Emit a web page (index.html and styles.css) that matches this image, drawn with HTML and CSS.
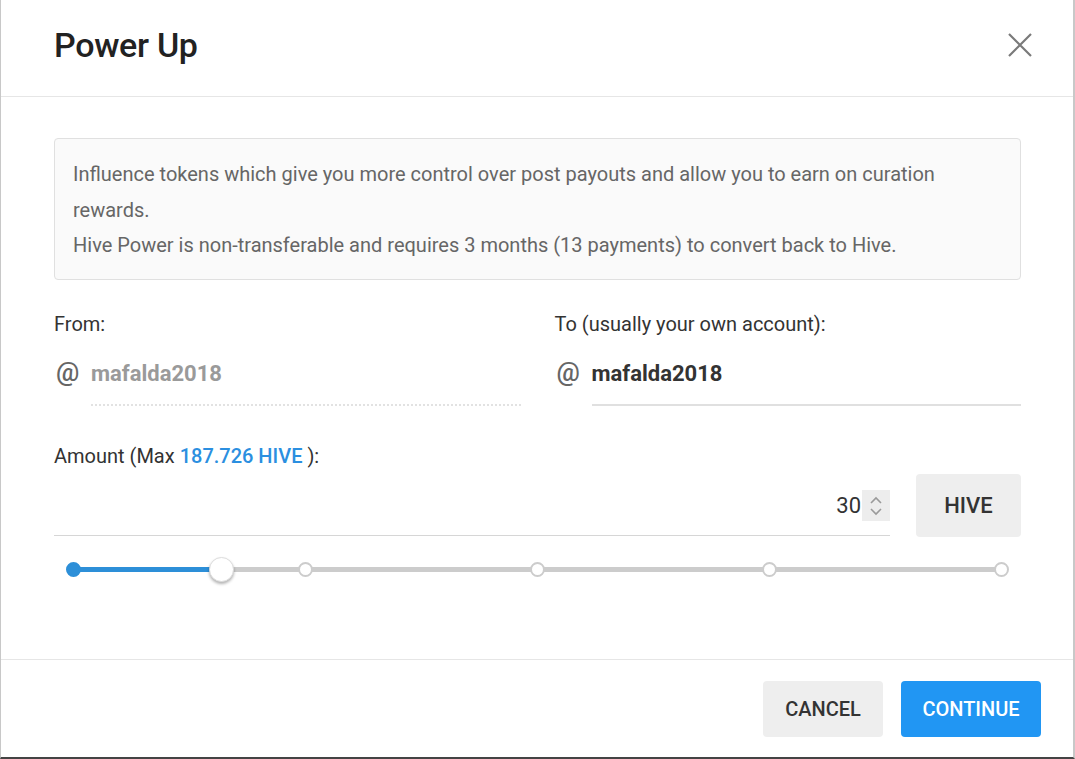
FILE: index.html
```html
<!DOCTYPE html>
<html lang="en">
<head>
    <meta charset="UTF-8">
    <meta name="viewport" content="width=device-width, initial-scale=1.0">
    <title>Power Up</title>
    <link rel="stylesheet" href="styles.css">
</head>
<body>
    <div class="modal">
        <div class="modal-header">
            <h1>Power Up</h1>
            <button class="close" aria-label="Close">
                <svg width="26" height="26" viewBox="0 0 26 26">
                    <path d="M2 2 L24 24 M24 2 L2 24" stroke="#7a7a7a" stroke-width="2.2" fill="none"/>
                </svg>
            </button>
        </div>

        <div class="modal-body">
            <div class="info">
                Influence tokens which give you more control over post payouts and allow you to earn on curation rewards.<br>
                Hive Power is non-transferable and requires 3 months (13 payments) to convert back to Hive.
            </div>

            <div class="accounts">
                <div class="field">
                    <label>From:</label>
                    <div class="account-input">
                        <span class="at">@</span>
                        <span class="account-value disabled">mafalda2018</span>
                    </div>
                </div>
                <div class="field">
                    <label>To (usually your own account):</label>
                    <div class="account-input">
                        <span class="at">@</span>
                        <span class="account-value">mafalda2018</span>
                    </div>
                </div>
            </div>

            <div class="amount">
                <label>Amount (Max <a href="#">187.726 HIVE</a> ):</label>
                <div class="amount-row">
                    <div class="amount-input">
                        <span class="amount-value">30</span>
                        <span class="spinner">
                            <svg width="16" height="24" viewBox="0 0 16 24">
                                <path d="M3 9 L8 4 L13 9 M3 15 L8 20 L13 15" stroke="#9a9a9a" stroke-width="1.6" fill="none"/>
                            </svg>
                        </span>
                    </div>
                    <button class="btn btn-grey currency">HIVE</button>
                </div>
            </div>

            <div class="slider">
                <div class="track"></div>
                <div class="track-fill" style="width: 16%"></div>
                <span class="mark filled" style="left: 0%"></span>
                <span class="mark" style="left: 25%"></span>
                <span class="mark" style="left: 50%"></span>
                <span class="mark" style="left: 75%"></span>
                <span class="mark" style="left: 100%"></span>
                <span class="thumb" style="left: 16%"></span>
            </div>
        </div>

        <div class="modal-footer">
            <button class="btn btn-grey">Cancel</button>
            <button class="btn btn-blue">Continue</button>
        </div>
    </div>
</body>
</html>
```

FILE: styles.css
```css
* {
    box-sizing: border-box;
}
body {
    font-family: Roboto, "Liberation Sans", Arial, sans-serif;
    background-color: #fff;
    margin: 0;
    padding: 0;
    color: #333;
}
.modal {
    width: 1075px;
    height: 759px;
    border-left: 1px solid #c8c8c8;
    border-right: 2px solid #c8c8c8;
    border-bottom: 2px solid #444;
    display: flex;
    flex-direction: column;
}
.modal-header {
    height: 97px;
    padding: 0 40px 7px 53px;
    display: flex;
    align-items: center;
    justify-content: space-between;
    border-bottom: 1px solid #e6e6e6;
}
.modal-header h1 {
    margin: 0;
    font-size: 34px;
    font-weight: 500;
    color: #222;
    letter-spacing: -0.3px;
}
.close {
    background: none;
    border: none;
    padding: 0;
    cursor: pointer;
    display: flex;
}
.modal-body {
    flex: 1;
    padding: 41px 52px 0 53px;
}
.info {
    background-color: #fafafa;
    border: 1px solid #e0e0e0;
    border-radius: 4px;
    padding: 18px 18px 15px;
    font-size: 20px;
    line-height: 35.5px;
    color: #666;
}
.accounts {
    display: grid;
    grid-template-columns: 1fr 1fr;
    gap: 34px;
    margin-top: 32px;
}
label {
    display: block;
    font-size: 20px;
    line-height: 24px;
    color: #333;
}
.account-input {
    display: flex;
    align-items: center;
    margin-top: 10px;
    height: 60px;
}
.at {
    width: 37px;
    padding-left: 2px;
    padding-bottom: 7px;
    font-size: 26px;
    font-weight: 500;
    color: #666;
}
.account-value {
    flex: 1;
    height: 60px;
    line-height: 56px;
    font-size: 22px;
    font-weight: 700;
    color: #333;
    border-bottom: 2px solid #e0e0e0;
}
.account-value.disabled {
    color: #9a9a9a;
    border-bottom: 2px dotted #e2e2e2;
}
.amount {
    margin-top: 38px;
}
.amount a {
    color: #2b8fe0;
    font-weight: 500;
    text-decoration: none;
}
.amount-row {
    display: flex;
    align-items: flex-end;
    gap: 26px;
    margin-top: 6px;
}
.amount-input {
    flex: 1;
    height: 56px;
    display: flex;
    justify-content: flex-end;
    align-items: center;
    padding-bottom: 3px;
    border-bottom: 1px solid #d6d6d6;
}
.amount-value {
    font-size: 22px;
    color: #333;
    padding-right: 1px;
}
.spinner {
    width: 28px;
    height: 31px;
    background-color: #ededed;
    display: flex;
    align-items: center;
    justify-content: center;
}
.btn {
    border: none;
    border-radius: 4px;
    font-family: inherit;
    font-size: 20px;
    font-weight: 500;
    text-transform: uppercase;
    cursor: pointer;
}
.btn-grey {
    background-color: #eee;
    color: #333;
}
.btn-blue {
    background-color: #2196f3;
    color: #fff;
}
.currency {
    width: 105px;
    height: 63px;
    margin-bottom: -1px;
    font-size: 22px;
}
.slider {
    position: relative;
    margin: 28px 20px 0 19px;
    height: 12px;
}
.track {
    position: absolute;
    left: 0;
    right: 0;
    top: 3px;
    height: 5px;
    background-color: #ccc;
    border-radius: 3px;
}
.track-fill {
    position: absolute;
    left: 0;
    top: 3px;
    height: 5px;
    background-color: #2d8fd8;
}
.mark {
    position: absolute;
    top: -2px;
    width: 15px;
    height: 15px;
    margin-left: -7.5px;
    border-radius: 50%;
    background-color: #fff;
    border: 2px solid #ccc;
}
.mark.filled {
    background-color: #2d8fd8;
    border-color: #2d8fd8;
}
.thumb {
    position: absolute;
    top: -7px;
    width: 25px;
    height: 25px;
    margin-left: -12.5px;
    border-radius: 50%;
    background-color: #fff;
    border: 1px solid #ddd;
    box-shadow: 0 2px 3px rgba(0, 0, 0, 0.3);
}
.modal-footer {
    height: 98px;
    border-top: 1px solid #e6e6e6;
    display: flex;
    justify-content: flex-end;
    align-items: center;
    gap: 18px;
    padding: 0 32px 0 0;
}
.modal-footer .btn {
    height: 56px;
}
.modal-footer .btn-grey {
    width: 120px;
}
.modal-footer .btn-blue {
    width: 140px;
}
```
